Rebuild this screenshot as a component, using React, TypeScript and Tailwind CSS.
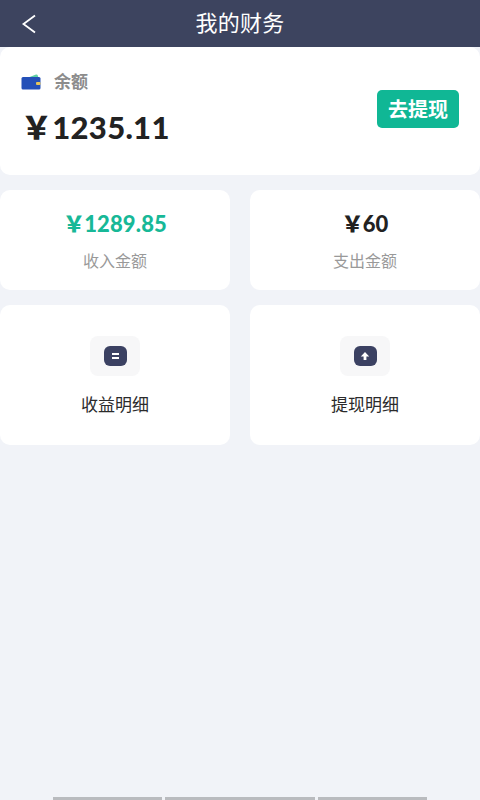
const font = { fontFamily: 'Lato, "Noto Sans CJK SC", sans-serif' };

function BackIcon() {
  return (
    <svg width="16" height="20" viewBox="0 0 16 20" className="absolute left-[21px] top-[14px]">
      <path d="M14 1.5 L2.5 10 L14 18.5" fill="none" stroke="#ffffff" strokeWidth="1.8" />
    </svg>
  );
}

function WalletIcon() {
  return (
    <svg width="20" height="16" viewBox="0 0 20 16" className="shrink-0">
      <path d="M6 4 L15 0.6 Q16.5 0.3 17 2 L17.4 4 Z" fill="#5fd0a5" />
      <rect x="0.5" y="3" width="19" height="12.5" rx="1.5" fill="#2450b8" />
      <rect x="15" y="8" width="4.5" height="3" rx="1" fill="#e6c65a" />
    </svg>
  );
}

function StatCard({ amount, label, color }: { amount: string; label: string; color: string }) {
  return (
    <div className="flex h-[100px] flex-col items-center rounded-[10px] bg-white pt-[20px]">
      <div className={`text-[22px] leading-[28px] font-black tracking-[0.15px] ${color}`}>
        <span className="-mr-[1px]">￥</span>
        {amount}
      </div>
      <div className="mt-[13px] text-[16px] leading-[20px] text-[#999999]">{label}</div>
    </div>
  );
}

function LinkCard({ label, icon }: { label: string; icon: React.ReactNode }) {
  return (
    <div className="flex h-[140px] flex-col items-center rounded-[10px] bg-white pt-[31px]">
      <div className="flex h-[40px] w-[50px] items-center justify-center rounded-[8px] bg-[#f7f7f8]">
        <div className="flex h-[20px] w-[23px] items-center justify-center rounded-[6px] bg-[#3b4162]">{icon}</div>
      </div>
      <div className="mt-[18px] text-[17px] leading-[22px] text-[#2b2b2b]">{label}</div>
    </div>
  );
}

export default function App() {
  return (
    <div className="flex h-[800px] w-[480px] flex-col overflow-hidden bg-[#f1f3f8]" style={font}>
      <header className="relative flex h-[47px] shrink-0 items-center justify-center bg-[#3d445f] pb-[3px]">
        <BackIcon />
        <h1 className="text-[22px] font-normal tracking-[0.3px] text-white">我的财务</h1>
      </header>

      <section className="flex h-[128px] shrink-0 items-start justify-between rounded-[10px] bg-white pl-[21px] pr-[21px]">
        <div>
          <div className="mt-[26px] flex items-center gap-[13px]">
            <WalletIcon />
            <span className="text-[17px] leading-[18px] font-bold text-[#8c8c8c]">余额</span>
          </div>
          <div className="mt-[18px] text-[31px] leading-[36px] font-black tracking-[0.3px] text-[#222222]">
            <span>￥</span>1235.11
          </div>
        </div>
        <button className="mt-[43px] h-[38px] w-[82px] rounded-[5px] bg-[#10b795] text-[20px] font-bold text-white">
          去提现
        </button>
      </section>

      <div className="mt-[15px] grid grid-cols-2 gap-x-[20px] gap-y-[15px]">
        <StatCard amount="1289.85" label="收入金额" color="text-[#17b897]" />
        <StatCard amount="60" label="支出金额" color="text-[#222222]" />
        <LinkCard
          label="收益明细"
          icon={
            <div className="flex flex-col gap-[2px]">
              <div className="h-[2px] w-[7px] bg-white" />
              <div className="h-[2px] w-[7px] bg-white" />
            </div>
          }
        />
        <LinkCard
          label="提现明细"
          icon={
            <svg width="10" height="10" viewBox="0 0 10 10">
              <path d="M5 1 L9.2 5.6 H6.4 V9 H3.6 V5.6 H0.8 Z" fill="#ffffff" />
            </svg>
          }
        />
      </div>

      <div className="mt-auto flex h-[3px] justify-center gap-[3px]">
        <div className="w-[109px] bg-[#b9bbbf]" />
        <div className="w-[150px] bg-[#b9bbbf]" />
        <div className="w-[109px] bg-[#b9bbbf]" />
      </div>
    </div>
  );
}
